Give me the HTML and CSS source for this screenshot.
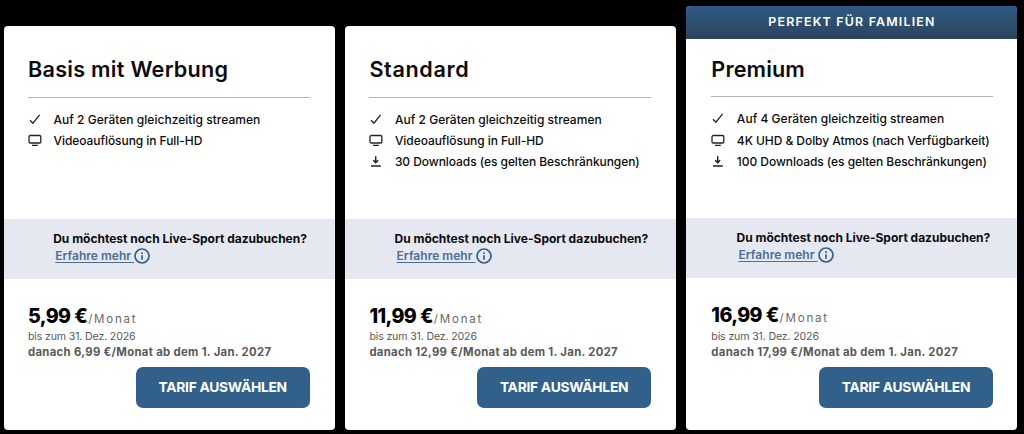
FILE: index.html
```html
<!DOCTYPE html>
<html lang="de">
<head>
  <meta charset="UTF-8" />
  <meta name="viewport" content="width=device-width, initial-scale=1.0"/>
  <title>Tarife</title>
  <link rel="stylesheet" href="styles.css">
</head>
<body>
  <svg width="0" height="0" class="sprite">
    <symbol id="check" viewBox="0 0 14 14"><path d="M2 8.2 L4.9 11.2 L11.6 2.9" /></symbol>
    <symbol id="tv" viewBox="0 0 14 14"><rect x="1" y="2.5" width="11.8" height="7.5" rx="1.3" /><path d="M4 12.3 H9.8" /></symbol>
    <symbol id="download" viewBox="0 0 14 14"><path d="M6.7 2.2 V8.4 M4.2 6.2 L6.7 8.7 L9.2 6.2 M2 12 H11.8" /></symbol>
    <symbol id="info" viewBox="0 0 16 16"><circle cx="8" cy="8" r="7" /><path d="M8 7.2 V11.7 M8 4.3 V5.9" /></symbol>
  </svg>

  <div class="plans">
    <div class="plan">
      <div class="top">
        <h2>Basis mit Werbung</h2>
        <ul>
          <li><svg class="icon"><use href="#check" /></svg><span class="f-streams">Auf 2 Geräten gleichzeitig streamen</span></li>
          <li><svg class="icon"><use href="#tv" /></svg><span>Videoauflösung in Full-HD</span></li>
        </ul>
      </div>
      <div class="addon">
        <p>Du möchtest noch Live-Sport dazubuchen?</p>
        <div class="more"><a href="#">Erfahre mehr&nbsp;</a><svg class="info"><use href="#info" /></svg></div>
      </div>
      <div class="bottom">
        <div class="price"><b>5,99 €</b><span>/Monat</span></div>
        <p class="until">bis zum 31. Dez. 2026</p>
        <p class="after">danach 6,99 €/Monat ab dem 1. Jan. 2027</p>
        <button>TARIF AUSWÄHLEN</button>
      </div>
    </div>

    <div class="plan standard">
      <div class="top">
        <h2>Standard</h2>
        <ul>
          <li><svg class="icon"><use href="#check" /></svg><span class="f-streams">Auf 2 Geräten gleichzeitig streamen</span></li>
          <li><svg class="icon"><use href="#tv" /></svg><span>Videoauflösung in Full-HD</span></li>
          <li><svg class="icon heavy"><use href="#download" /></svg><span>30 Downloads (es gelten Beschränkungen)</span></li>
        </ul>
      </div>
      <div class="addon">
        <p>Du möchtest noch Live-Sport dazubuchen?</p>
        <div class="more"><a href="#">Erfahre mehr&nbsp;</a><svg class="info"><use href="#info" /></svg></div>
      </div>
      <div class="bottom">
        <div class="price"><b>11,99 €</b><span>/Monat</span></div>
        <p class="until">bis zum 31. Dez. 2026</p>
        <p class="after">danach 12,99 €/Monat ab dem 1. Jan. 2027</p>
        <button>TARIF AUSWÄHLEN</button>
      </div>
    </div>

    <div class="plan premium">
      <div class="banner">PERFEKT FÜR FAMILIEN</div>
      <div class="top">
        <h2>Premium</h2>
        <ul>
          <li><svg class="icon"><use href="#check" /></svg><span class="f-streams">Auf 4 Geräten gleichzeitig streamen</span></li>
          <li><svg class="icon"><use href="#tv" /></svg><span>4K UHD &amp; Dolby Atmos (nach Verfügbarkeit)</span></li>
          <li><svg class="icon heavy"><use href="#download" /></svg><span>100 Downloads (es gelten Beschränkungen)</span></li>
        </ul>
      </div>
      <div class="addon">
        <p>Du möchtest noch Live-Sport dazubuchen?</p>
        <div class="more"><a href="#">Erfahre mehr&nbsp;</a><svg class="info"><use href="#info" /></svg></div>
      </div>
      <div class="bottom">
        <div class="price"><b>16,99 €</b><span>/Monat</span></div>
        <p class="until">bis zum 31. Dez. 2026</p>
        <p class="after">danach 17,99 €/Monat ab dem 1. Jan. 2027</p>
        <button>TARIF AUSWÄHLEN</button>
      </div>
    </div>
  </div>
</body>
</html>
```

FILE: styles.css
```css
* {
  box-sizing: border-box;
}
body {
  margin: 0;
  height: 434px;
  overflow: hidden;
  background: #000;
  color: #0b0b0d;
  font-family: Inter, "Liberation Sans", sans-serif;
  white-space: nowrap;
}
h2, p, ul {
  margin: 0;
  padding: 0;
}
.sprite {
  position: absolute;
}
svg {
  fill: none;
  stroke: #222;
  stroke-width: 1.3;
}
.plans {
  display: grid;
  grid-template-columns: repeat(3, 331px);
  column-gap: 10.4px;
  align-items: end;
  height: 429.5px;
  padding-left: 3.7px;
}
.plan {
  height: 404px;
  background: #fff;
  border-radius: 4px;
  overflow: hidden;
}
.premium {
  height: 424px;
}
.banner {
  height: 33px;
  line-height: 32px;
  background: linear-gradient(#2f5a85, #2c445c);
  color: #fff;
  font-size: 12.4px;
  font-weight: 600;
  letter-spacing: 1.2px;
  text-align: center;
}
.top {
  height: 193.5px;
  padding: 24px 25px 0 24.3px;
}
.premium .top {
  height: 179.5px;
  padding: 11px 24.5px 0 24.9px;
}
h2 {
  height: 48px;
  line-height: 38px;
  border-bottom: 1px solid #b5b5b5;
  font-size: 21.6px;
  font-weight: 600;
  letter-spacing: 0.28px;
}
.standard h2 {
  letter-spacing: 0.65px;
}
.premium h2 {
  height: 47px;
  letter-spacing: 0.15px;
}
ul {
  padding-top: 11.4px;
  list-style: none;
}
li {
  display: flex;
  align-items: center;
  height: 21px;
  font-size: 12px;
  font-weight: 500;
  letter-spacing: -0.06px;
}
.premium li:first-child {
  height: 22px;
  padding-bottom: 1px;
}
.f-streams {
  letter-spacing: 0.03px;
}
.icon {
  width: 14px;
  height: 14px;
  margin-right: 11.5px;
}
.heavy {
  stroke-width: 1.5;
}
.addon {
  height: 60px;
  padding: 10.5px 0 0 49.5px;
  background: #e5e7f1;
  font-size: 12px;
}
.premium .addon {
  padding-left: 50.1px;
}
.addon p {
  line-height: 18px;
  font-weight: 700;
  letter-spacing: -0.01px;
}
.more {
  display: flex;
  align-items: center;
  height: 16px;
}
.addon a {
  margin-left: 2px;
  color: #4a6f98;
  font-weight: 600;
  letter-spacing: 0.03px;
  text-underline-offset: 2px;
}
.info {
  width: 16px;
  height: 16px;
  stroke: #34608d;
  stroke-width: 1.7;
}
.bottom {
  display: flex;
  flex-direction: column;
  padding: 24px 25px 0 24.3px;
  color: #58585a;
}
.premium .bottom {
  padding: 24px 24.5px 0 24.9px;
}
.price {
  height: 26.4px;
  line-height: 26px;
}
.premium .price {
  height: 27.4px;
}
.price b {
  margin-right: 1px;
  color: #000;
  font-size: 19.6px;
  font-weight: 800;
  letter-spacing: -0.6px;
}
.price span {
  color: #68686a;
  font-size: 11.5px;
  letter-spacing: 1.8px;
}
.until {
  line-height: 16px;
  font-size: 10.6px;
  letter-spacing: -0.15px;
}
.after {
  line-height: 15px;
  font-size: 11.3px;
  font-weight: 700;
  letter-spacing: 0.33px;
}
button {
  align-self: flex-end;
  width: 174px;
  height: 41px;
  margin-top: 6.5px;
  padding: 0;
  border: none;
  border-radius: 7px;
  background: #31608b;
  color: #fff;
  font-family: inherit;
  font-size: 13.8px;
  font-weight: 700;
  letter-spacing: -0.27px;
}
```
